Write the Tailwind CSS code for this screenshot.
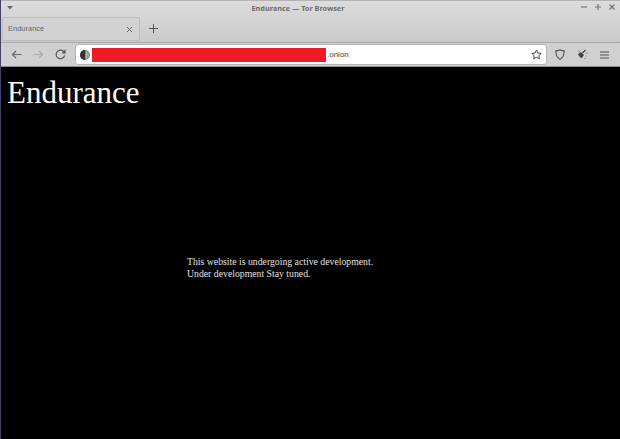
<!DOCTYPE html>
<html>
<head>
<meta charset="utf-8">
<script src="https://cdn.jsdelivr.net/npm/@tailwindcss/browser@4"></script>
</head>
<body class="w-[620px] h-[439px] overflow-hidden bg-black">
<div class="w-[620px] h-[439px] flex flex-col border-l border-l-[#4a4066] font-['Liberation_Sans',sans-serif]">
  <div class="h-[43px] shrink-0 bg-gradient-to-b from-[#dcdcdc] to-[#cacaca] border-t border-t-[#b4b4b4] border-b border-b-[#a8a8a8] flex flex-col">
    <div class="h-[14px] flex items-center relative">
      <svg class="absolute left-[6px] top-[5px]" width="6" height="4" viewBox="0 0 6 4"><path d="M0 0h6L3 3.5z" fill="#666"/></svg>
      <div class="w-full text-center text-[7.3px] font-bold text-[#6e6e6e] font-['Noto_Sans',sans-serif] leading-none pt-[2px] pr-[25px]">Endurance — Tor Browser</div>
      <div class="absolute right-0 top-[2px] flex items-center gap-[8px] pr-[5px] text-[#777]">
        <svg width="6" height="8" viewBox="0 0 6 8"><path d="M0 4h6" stroke="#777" stroke-width="1.2"/></svg>
        <svg width="6" height="8" viewBox="0 0 6 8"><path d="M0 4h6M3 1v6" stroke="#777" stroke-width="1.2"/></svg>
        <svg width="6" height="8" viewBox="0 0 6 8"><path d="M.5 1.5l5 5M5.5 1.5l-5 5" stroke="#777" stroke-width="1.2"/></svg>
      </div>
    </div>
    <div class="flex items-start pl-[1px] pt-[2px]">
      <div class="w-[138px] h-[24px] bg-[#d2d2d2] border border-[#bdbdbd] rounded-[2px] flex items-center justify-between pl-[5px] pr-[6px]">
        <span class="text-[7.5px] text-[#666]">Endurance</span>
        <svg width="7" height="7" viewBox="0 0 7 7"><path d="M1 1l5 5M6 1l-5 5" stroke="#666" stroke-width="1"/></svg>
      </div>
      <svg class="ml-[9px] mt-[7px]" width="9" height="9" viewBox="0 0 9 9"><path d="M0 4.5h9M4.5 0v9" stroke="#555" stroke-width="1"/></svg>
    </div>
  </div>
  <div class="h-[24px] shrink-0 bg-[#d0d0d0] border-b border-b-[#8e8e8e] flex items-center relative">
    <svg class="ml-[10px]" width="11" height="11" viewBox="0 0 11 11" fill="none"><path d="M10.5 5.5H1.5M5 2L1.5 5.5 5 9" stroke="#666" stroke-width="1.2"/></svg>
    <svg class="ml-[11px]" width="11" height="11" viewBox="0 0 11 11" fill="none"><path d="M.5 5.5H9.5M6 2l3.5 3.5L6 9" stroke="#aaa" stroke-width="1.2"/></svg>
    <svg class="ml-[11px]" width="11" height="11" viewBox="0 0 11 11" fill="none"><path d="M9.6 6.5A4.3 4.3 0 1 1 8.4 2.3L10 3.8M10 .8v3H7" stroke="#555" stroke-width="1.2"/></svg>
    <div class="ml-[9px] w-[472px] h-[21px] bg-white border border-[#b5b5b5] rounded-[3px] flex items-center pl-[4px]">
      <svg width="10" height="10" viewBox="0 0 10 10"><circle cx="5" cy="5" r="5" fill="#888"/><path d="M5 0a5 5 0 0 0 0 10z" fill="#333"/><path d="M6.5 1.5v7M8 3v4" stroke="#ddd" stroke-width=".6"/></svg>
      <div class="ml-[2px] w-[234px] h-[14px] bg-[#ed1c24]"></div>
      <span class="ml-[1px] text-[8px] text-[#444]">.onion</span>
      <svg class="ml-auto mr-[4px]" width="11" height="11" viewBox="0 0 11 11" fill="none"><path d="M5.5 1l1.4 3 3.3.4-2.4 2.2.6 3.2-2.9-1.6-2.9 1.6.6-3.2L.8 4.4l3.3-.4z" stroke="#444" stroke-width="1"/></svg>
    </div>
    <svg class="ml-[8px]" width="10" height="11" viewBox="0 0 10 11" fill="none"><path d="M5 .8C3.8 1.6 2.2 1.9.8 1.9c0 3.4.8 6.6 4.2 8.3 3.4-1.7 4.2-4.9 4.2-8.3C7.8 1.9 6.2 1.6 5 .8z" stroke="#555" stroke-width="1.1"/></svg>
    <svg class="ml-[12px]" width="11" height="11" viewBox="0 0 11 11" fill="none"><path d="M1 5l3-2 3 3-2 3c-2 0-3-2-4-4z" fill="#444"/><path d="M5.5 4L8.5 1" stroke="#444" stroke-width="1.2"/><path d="M9 4h1.5M8.5 7h1M7.5 9.5h1M2 1.5v1.5" stroke="#777"/></svg>
    <svg class="ml-[12px]" width="9" height="8" viewBox="0 0 9 8" fill="none"><path d="M0 1h9M0 4h9M0 7h9" stroke="#555" stroke-width="1.1"/></svg>
  </div>
  <div class="flex-1 bg-black font-['Liberation_Serif',serif] relative">
    <h1 class="text-[31px] leading-[36px] text-white pl-[6px] pt-[8px]">Endurance</h1>
    <div class="absolute left-[186px] top-[189px] text-[9.75px] leading-[12px] text-[#e0e0e0]">
      <p>This website is undergoing active development.</p>
      <p>Under development Stay tuned.</p>
    </div>
  </div>
</div>
</body>
</html>
